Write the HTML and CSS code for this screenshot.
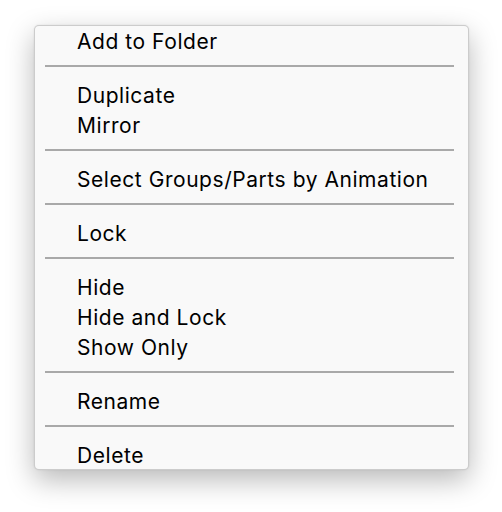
FILE: index.html
```html
<!DOCTYPE html>
<html>
<head>
<meta charset="utf-8">
<link rel="stylesheet" href="styles.css">
</head>
<body>
<div class="menu">
  <div class="item">Add to Folder</div>
  <div class="sep"></div>
  <div class="item">Duplicate</div>
  <div class="item">Mirror</div>
  <div class="sep"></div>
  <div class="item">Select Groups/Parts by Animation</div>
  <div class="sep"></div>
  <div class="item">Lock</div>
  <div class="sep"></div>
  <div class="item">Hide</div>
  <div class="item">Hide and Lock</div>
  <div class="item">Show Only</div>
  <div class="sep"></div>
  <div class="item">Rename</div>
  <div class="sep"></div>
  <div class="item">Delete</div>
</div>
</body>
</html>
```
FILE: styles.css
```css
html, body {
  margin: 0;
  padding: 0;
  background: #ffffff;
}
body {
  width: 502px;
  height: 512px;
  overflow: hidden;
  padding-top: 25px;
  padding-left: 34px;
  box-sizing: border-box;
}
.menu {
  box-sizing: border-box;
  width: 435px;
  height: 445px;
  background: #f9f9f9;
  border: 1px solid rgba(0, 0, 0, 0.18);
  border-radius: 5px;
  box-shadow: 0 10px 28px rgba(0, 0, 0, 0.28), 0 0 2px rgba(0, 0, 0, 0.1);
  overflow: hidden;
  display: flex;
  flex-direction: column;
  font-family: Inter, "Liberation Sans", sans-serif;
  font-size: 21px;
  letter-spacing: 0.55px;
  color: #000;
}
.item {
  flex: none;
  box-sizing: border-box;
  height: 30px;
  padding-top: 1px;
  line-height: 30px;
  padding-left: 42px;
  white-space: nowrap;
}
.sep {
  flex: none;
  height: 2px;
  margin: 9px 14px 13px 10px;
  background: #a9a9a9;
}
```
